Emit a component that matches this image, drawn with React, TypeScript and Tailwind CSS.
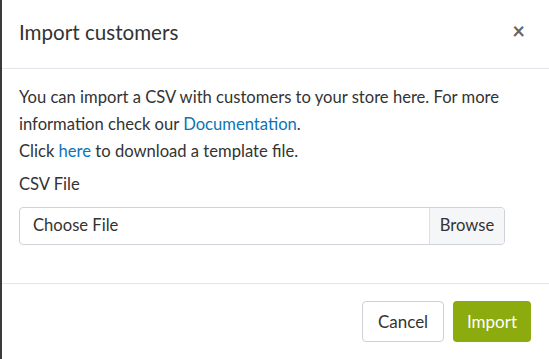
import React from 'react';

export default function App() {
  return (
    <div className="w-[549px] h-[359px] overflow-hidden bg-white" style={{ fontFamily: 'Lato, "Open Sans", sans-serif' }}>
      <div className="h-full border-l-[2px] border-[#3a3a3a] flex flex-col text-[#333]">
        <div className="h-[69px] flex items-center justify-between pl-[17px] pr-[24px] border-b border-[#e4e6eb]">
          <h2 className="text-[20.6px] leading-none -mt-[3px]">Import customers</h2>
          <button className="text-[#666] text-[22px] font-bold leading-none -mt-[6px]">×</button>
        </div>

        <div className="pl-[17px] pt-[15px] h-[215px] border-b border-[#e4e6eb]">
          <p className="text-[16.6px] leading-[27px] w-[495px]">
            You can import a CSV with customers to your store here. For more information check our{' '}
            <a className="text-[#0a75b8]">Documentation</a>.
            <br />
            Click <a className="text-[#0a75b8]">here</a> to download a template file.
          </p>
          <div className="mt-[6px] text-[16.6px] leading-[27px]">CSV File</div>
          <div className="mt-[9px] w-[486px] h-[38px] flex border border-[#cfd3d9] rounded-[4px] overflow-hidden text-[16.6px]">
            <div className="flex-1 flex items-center pl-[13px] -mt-[2px]">Choose File</div>
            <div className="w-[75px] flex items-center justify-center bg-[#f5f6f8] border-l border-[#dcdfe4] -mt-[2px]">Browse</div>
          </div>
        </div>

        <div className="flex justify-end gap-[9px] pr-[18px] pt-[17px]">
          <button className="w-[82px] h-[41px] border border-[#cdd1d7] rounded-[4px] text-[17px] bg-white">Cancel</button>
          <button className="w-[78px] h-[41px] rounded-[4px] text-[17px] bg-[#8bab0f] text-white">Import</button>
        </div>
      </div>
    </div>
  );
}
